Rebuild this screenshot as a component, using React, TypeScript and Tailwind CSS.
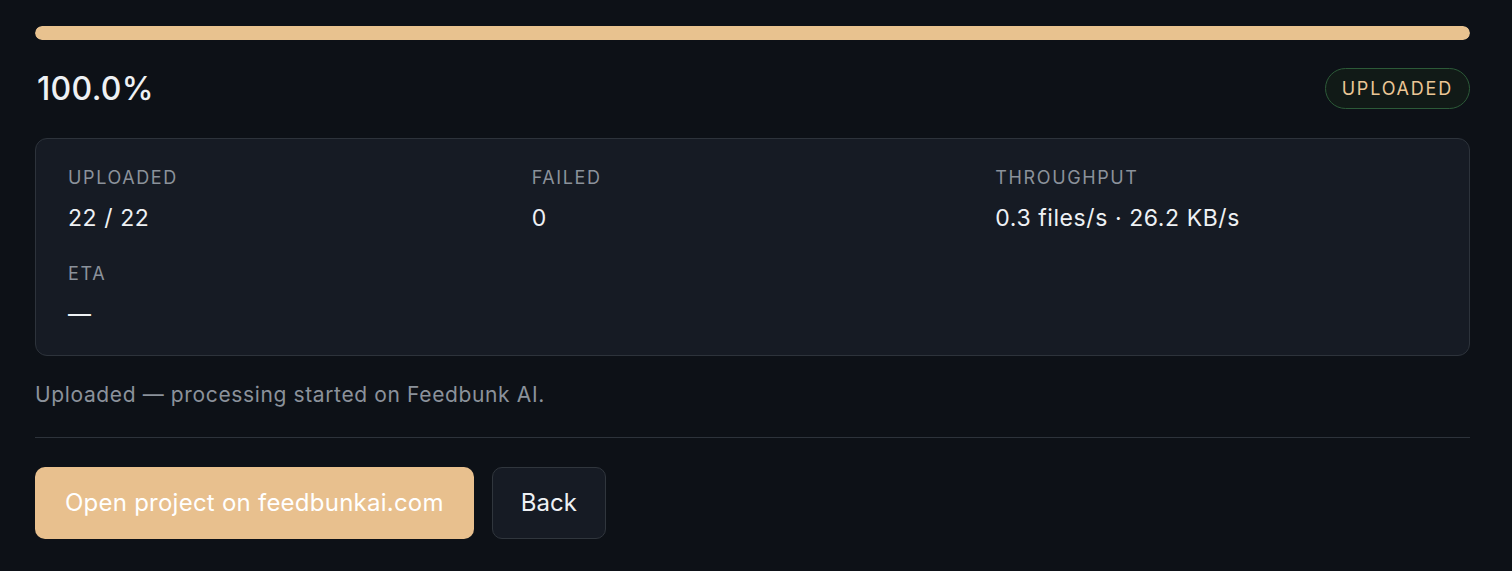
import React from 'react'

type Stat = { label: string; value: string }

const stats: Stat[] = [
  { label: 'Uploaded', value: '22 / 22' },
  { label: 'Failed', value: '0' },
  { label: 'Throughput', value: '0.3 files/s · 26.2 KB/s' },
  { label: 'ETA', value: '—' },
]

export default function App() {
  const progress = 100

  return (
    <div
      className="min-h-[571px] bg-[#0d1117] pl-[35px] pr-[42px] pt-[26px] text-[#e6edf3]"
      style={{ fontFamily: 'Inter, "Noto Sans", sans-serif' }}
    >
      {/* Progress bar */}
      <div className="h-[14px] w-full overflow-hidden rounded-full bg-[#21262d]">
        <div className="h-full rounded-full bg-[#e8c28f]" style={{ width: `${progress}%` }} />
      </div>

      {/* Percent + status badge */}
      <div className="mt-[28px] flex items-center justify-between">
        <div className="pl-[2px] text-[32px] font-medium leading-[41px] tracking-[0.01em] text-[#eef1f4]">
          {progress.toFixed(1)}%
        </div>
        <span className="flex h-[41px] items-center rounded-full border-[1.5px] border-[#2c5a38] bg-[#111a17] px-[16px] text-[18px] tracking-[0.1em] text-[#ebc696]">
          UPLOADED
        </span>
      </div>

      {/* Stats card */}
      <div className="mt-[29px] rounded-[12px] border border-[#2d333b] bg-[#161b24] px-[32px] py-[24px]">
        <div className="grid grid-cols-3 gap-x-[22px] gap-y-6">
          {stats.map((s) => (
            <div key={s.label}>
              <div className="text-[18px] uppercase leading-[29px] tracking-[0.09em] text-[#8b929b]">
                {s.label}
              </div>
              <div className="mt-[10px] text-[23px] leading-[33px] tracking-[0.025em] text-[#eef1f4]">
                {s.value}
              </div>
            </div>
          ))}
        </div>
      </div>

      <p className="mt-[25px] text-[21px] leading-[28px] tracking-[0.03em] text-[#8b929b]">
        Uploaded — processing started on Feedbunk AI.
      </p>

      <div className="mt-[28px] h-px bg-[#2d333b]" />

      {/* Actions */}
      <div className="mt-[29px] flex gap-[18px]">
        <button
          type="button"
          className="rounded-[10px] bg-[#e8c08e] px-[30px] py-[20px] text-[24px] leading-[32px] tracking-[0.01em] text-white"
        >
          Open project on feedbunkai.com
        </button>
        <button
          type="button"
          className="rounded-[10px] border border-[#30363d] bg-[#161b24] px-[28px] py-[19px] text-[24px] leading-[32px] text-[#eef1f4]"
        >
          Back
        </button>
      </div>
    </div>
  )
}
